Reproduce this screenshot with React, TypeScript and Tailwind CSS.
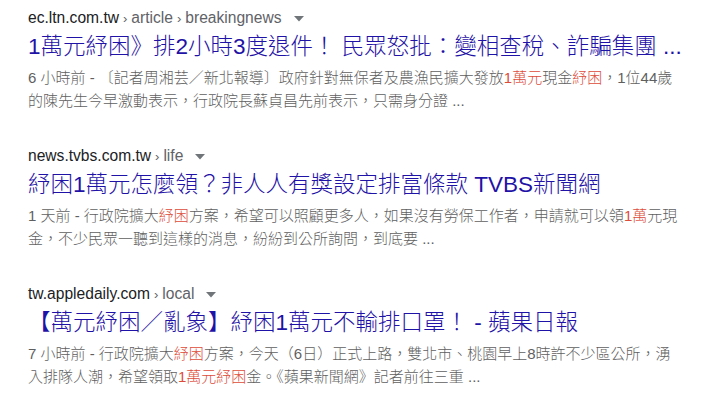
import React from 'react'

type Seg = string | { hl: string }

interface ResultProps {
    domain: string
    path: string[]
    title: string
    lines: Seg[][]
}

const FONT = '"Liberation Sans", Arial, "Noto Sans CJK TC", sans-serif'

const Line: React.FC<{ segs: Seg[] }> = ({ segs }) => (
    <div className="whitespace-nowrap h-[23px] leading-[23px]">
        {segs.map((s, i) =>
            typeof s === 'string' ? (
                <span key={i}>{s}</span>
            ) : (
                <span key={i} className="text-[#dd4b39]">{s.hl}</span>
            )
        )}
    </div>
)

const Result: React.FC<ResultProps> = ({ domain, path, title, lines }) => (
    <div className="h-[138px]">
        <div className="flex items-center h-[22px] text-[15.6px] whitespace-nowrap">
            <span className="text-[#202124]">{domain}</span>
            {path.map((p) => (
                <span key={p} className="text-[#5f6368]">
                    <span className="px-[4px] text-[13px]">›</span>{p}
                </span>
            ))}
            <svg className="ml-[12px] mt-[1px]" width="10" height="6" viewBox="0 0 10 6">
                <path d="M0 0 L10 0 L5 5.5 Z" fill="#70757a" />
            </svg>
        </div>
        <div className="mt-[4px] h-[28px] leading-[28px] text-[22.5px] font-light text-[#1f12a6] whitespace-nowrap">
            {title}
        </div>
        <div className="mt-[4.5px] text-[15px] font-light text-[#5f5f5f]">
            {lines.map((l, i) => (
                <Line key={i} segs={l} />
            ))}
        </div>
    </div>
)

const results: ResultProps[] = [
    {
        domain: 'ec.ltn.com.tw',
        path: ['article', 'breakingnews'],
        title: '1萬元紓困》排2小時3度退件！ 民眾怒批：變相查稅、詐騙集團 ...',
        lines: [
            ['6 小時前 - 〔記者周湘芸／新北報導〕政府針對無保者及農漁民擴大發放', { hl: '1萬元' }, '現金', { hl: '紓困' }, '，1位44歲'],
            ['的陳先生今早激動表示，行政院長蘇貞昌先前表示，只需身分證 ...'],
        ],
    },
    {
        domain: 'news.tvbs.com.tw',
        path: ['life'],
        title: '紓困1萬元怎麼領？非人人有獎設定排富條款 TVBS新聞網',
        lines: [
            ['1 天前 - 行政院擴大', { hl: '紓困' }, '方案，希望可以照顧更多人，如果沒有勞保工作者，申請就可以領', { hl: '1萬' }, '元現'],
            ['金，不少民眾一聽到這樣的消息，紛紛到公所詢問，到底要 ...'],
        ],
    },
    {
        domain: 'tw.appledaily.com',
        path: ['local'],
        title: '【萬元紓困／亂象】紓困1萬元不輸排口罩！ - 蘋果日報',
        lines: [
            ['7 小時前 - 行政院擴大', { hl: '紓困' }, '方案，今天（6日）正式上路，雙北市、桃園早上8時許不少區公所，湧'],
            ['入排隊人潮，希望領取', { hl: '1萬元紓困' }, '金。《蘋果新聞網》記者前往三重 ...'],
        ],
    },
]

export default function App() {
    return (
        <div className="w-[720px] h-[410px] overflow-hidden bg-white pl-[28px] pt-[7px]" style={{ fontFamily: FONT }}>
            {results.map((r) => (
                <Result key={r.domain} {...r} />
            ))}
        </div>
    )
}
